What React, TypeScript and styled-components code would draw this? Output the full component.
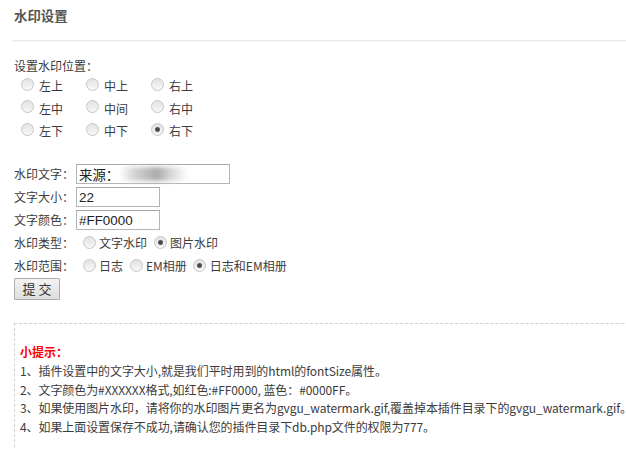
import React from "react";
import styled, { createGlobalStyle } from "styled-components";

const Global = createGlobalStyle`
  html, body { margin: 0; padding: 0; background: #fff; overflow: hidden; }
  body {
    font-family: "Noto Sans CJK SC", "Microsoft YaHei", sans-serif;
    font-size: 12px;
    color: #3c3c3c;
  }
`;

const Page = styled.div`
  width: 626px;
  height: 449px;
  padding-left: 14px;
  box-sizing: border-box;
  overflow: hidden;
`;

const Header = styled.div`
  margin-left: -2px;
  height: 40px;
  border-bottom: 1px solid #e9e9e9;
  box-shadow: 0 1px 0 #f7f7f7;
`;

const Title = styled.h2`
  margin: 0;
  padding-left: 2px;
  font-size: 13.4px;
  font-weight: 700;
  line-height: 30px;
  color: #555;
`;

const SectionLabel = styled.div`
  margin-top: 16px;
  line-height: 18px;
  height: 18px;
`;

const PositionGrid = styled.div`
  display: grid;
  grid-template-columns: repeat(3, 65px);
  grid-auto-rows: 22.5px;
`;

const Choice = styled.label`
  display: inline-flex;
  align-items: center;
  white-space: nowrap;
  line-height: 18px;
`;

const Radio = styled.input.attrs({ type: "radio" })<{ $lift?: number; $tight?: boolean }>`
  appearance: none;
  -webkit-appearance: none;
  box-sizing: border-box;
  width: 13px;
  height: 13px;
  margin: 0 ${(p) => (p.$tight ? 3.5 : 5.5)}px ${(p) => p.$lift ?? 2}px 6.5px;
  border-radius: 50%;
  border: 1px solid #c6c6c6;
  background: linear-gradient(#e2e2e2, #f8f8f8);
  &:checked {
    background: radial-gradient(circle at 50% 50%, #4a4a4a 0 1.8px, #8a8a8a 2.4px, transparent 3px),
      linear-gradient(#e2e2e2, #f8f8f8);
  }
` as any;

const Form = styled.div`
  margin-top: 20px;
  display: flex;
  flex-direction: column;
`;

const FormRow = styled.div`
  display: flex;
  align-items: center;
  height: 23px;
  line-height: 18px;
`;

const FieldLabel = styled.span`
  width: 62px;
  flex: none;
`;

const InputWrap = styled.span`
  position: relative;
  display: inline-flex;
`;

const TextInput = styled.input<{ $w: number }>`
  box-sizing: border-box;
  width: ${(p) => p.$w}px;
  height: 20px;
  margin: 0;
  padding: 0 2px;
  border: 1px solid #b5b5b5;
  border-top-color: #a8a8a8;
  font-family: "Liberation Sans", "Noto Sans CJK SC", sans-serif;
  font-size: 13.4px;
  color: #222;
  outline: none;
`;

const Redacted = styled.span`
  position: absolute;
  left: 44px;
  top: 3px;
  width: 68px;
  height: 14px;
  background: linear-gradient(
    to right,
    rgba(190, 190, 190, 0) 0%,
    #d8d8d8 18%,
    #bcbcbc 40%,
    #ababab 55%,
    #d2d2d2 72%,
    rgba(220, 220, 220, 0) 100%
  );
  filter: blur(2px);
  pointer-events: none;
`;

const Submit = styled.button`
  box-sizing: border-box;
  width: 46px;
  height: 22px;
  margin: 0;
  padding: 0;
  border: 1px solid #acacac;
  border-radius: 1px;
  background: linear-gradient(#f3f3f3, #dedede);
  font-family: "Noto Sans CJK SC", sans-serif;
  font-size: 13px;
  line-height: 18px;
  color: #333;
`;

const TipBox = styled.div`
  margin-top: 22.5px;
  width: 720px;
  height: 200px;
  box-sizing: border-box;
  border: 1px dashed #cfcfcf;
  padding: 19px 0 0 5px;
  line-height: 18.8px;
  white-space: nowrap;
  letter-spacing: -0.08px;
`;

const TipTitle = styled.div`
  color: #f00;
  font-weight: 700;
  letter-spacing: 0;
`;

const TipLine = styled.div``;

const positions = [
  ["左上", "中上", "右上"],
  ["左中", "中间", "右中"],
  ["左下", "中下", "右下"],
];

export default function App() {
  return (
    <Page>
      <Global />
      <Header>
        <Title>水印设置</Title>
      </Header>
      <SectionLabel>设置水印位置：</SectionLabel>
      <PositionGrid>
        {positions.flat().map((p) => (
          <Choice key={p}>
            <Radio name="pos" $lift={4} defaultChecked={p === "右下"} />
            {p}
          </Choice>
        ))}
      </PositionGrid>
      <Form>
        <FormRow>
          <FieldLabel>水印文字：</FieldLabel>
          <InputWrap>
            <TextInput $w={154} defaultValue="来源：" />
            <Redacted />
          </InputWrap>
        </FormRow>
        <FormRow>
          <FieldLabel>文字大小：</FieldLabel>
          <TextInput $w={84} defaultValue="22" />
        </FormRow>
        <FormRow>
          <FieldLabel>文字颜色：</FieldLabel>
          <TextInput $w={84} defaultValue="#FF0000" />
        </FormRow>
        <FormRow>
          <FieldLabel>水印类型：</FieldLabel>
          <Choice>
            <Radio name="type" $tight $lift={1} />
            文字水印
          </Choice>
          <Choice>
            <Radio name="type" $tight $lift={1} defaultChecked />
            图片水印
          </Choice>
        </FormRow>
        <FormRow>
          <FieldLabel>水印范围：</FieldLabel>
          <Choice>
            <Radio name="scope" $tight $lift={1} />
            日志
          </Choice>
          <Choice>
            <Radio name="scope" $tight $lift={1} />
            EM相册
          </Choice>
          <Choice>
            <Radio name="scope" $tight $lift={1} defaultChecked />
            日志和EM相册
          </Choice>
        </FormRow>
        <FormRow>
          <Submit>提 交</Submit>
        </FormRow>
      </Form>
      <TipBox>
        <TipTitle>小提示：</TipTitle>
        <TipLine>1、插件设置中的文字大小,就是我们平时用到的html的fontSize属性。</TipLine>
        <TipLine>2、文字颜色为#XXXXXX格式,如红色:#FF0000, 蓝色：#0000FF。</TipLine>
        <TipLine>3、如果使用图片水印，请将你的水印图片更名为gvgu_watermark.gif,覆盖掉本插件目录下的gvgu_watermark.gif。</TipLine>
        <TipLine>4、如果上面设置保存不成功,请确认您的插件目录下db.php文件的权限为777。</TipLine>
      </TipBox>
    </Page>
  );
}
